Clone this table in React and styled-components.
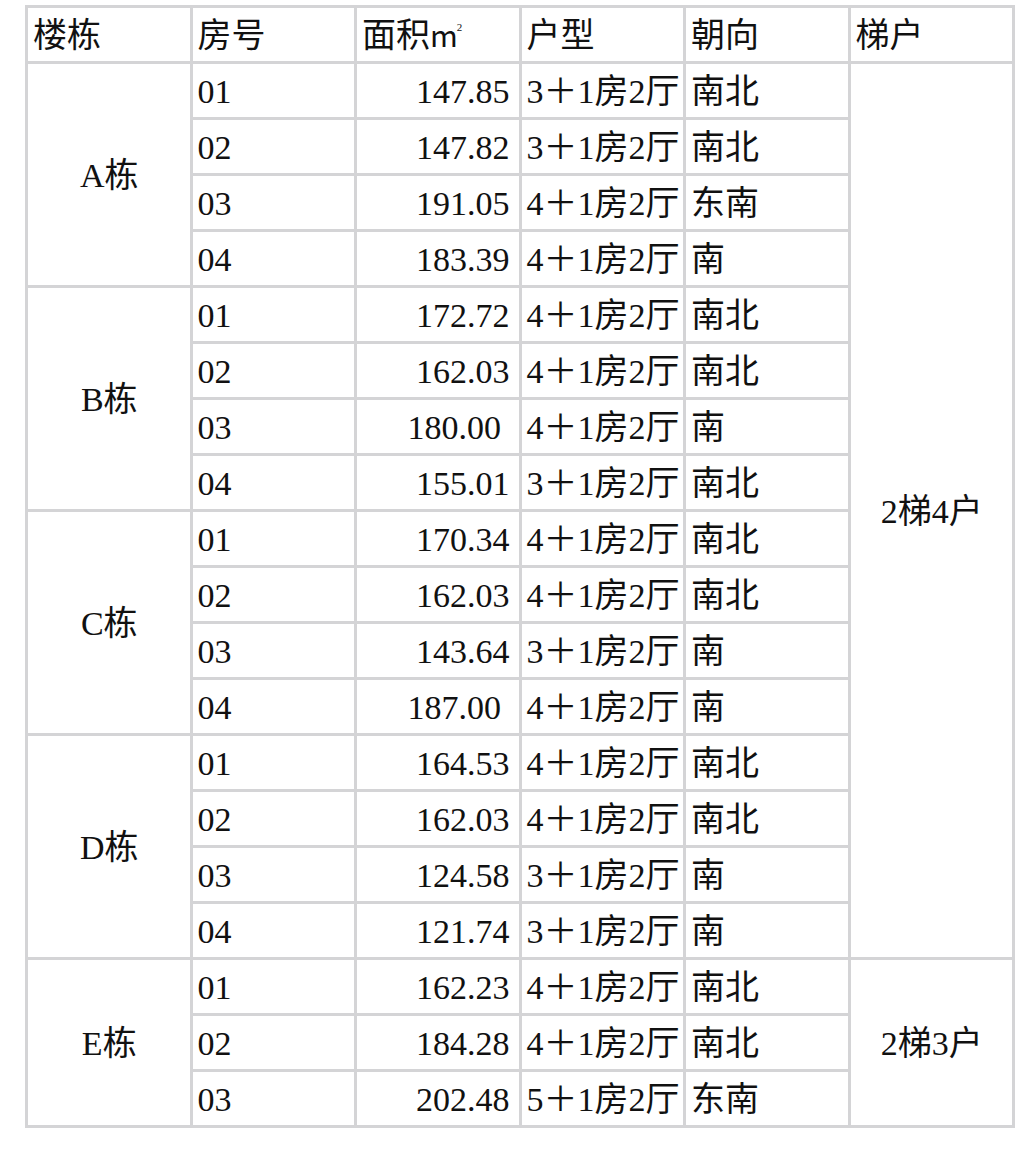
import React from 'react';
import styled, {createGlobalStyle} from 'styled-components';

const GlobalStyle = createGlobalStyle`
    body {
        margin: 0;
        background: #fff;
    }
`;

const Page = styled.div`
    padding: 5px 0 0 25px;
`;

const Table = styled.table`
    width: 990px;
    table-layout: fixed;
    border-collapse: separate;
    border-spacing: 0;
    border-top: solid 3px #d4d4d6;
    border-left: solid 3px #d4d4d6;
    font-family: "Liberation Serif", "Noto Sans CJK SC", serif;
    font-size: 34px;
    color: #111;
`;

const Cell = styled.td`
    height: 51px;
    padding: ${props => props.align === 'right' ? '2px 9px 0 4px' : '2px 4px 0 5px'};
    border-right: solid 3px #d4d4d6;
    border-bottom: solid 3px #d4d4d6;
    text-align: ${props => props.align || 'left'};
    vertical-align: middle;
    white-space: nowrap;
    overflow: visible;
    line-height: 1;
`;

const Unit = styled.span`
    font-family: "Noto Sans CJK SC", "Liberation Sans", sans-serif;
    font-size: 30px;
`;

const Sup = styled.span`
    font-size: 11px;
    vertical-align: 16px;
    margin-left: -1px;
`;

const buildings = [
    {
        name: 'A栋',
        units: [
            ['01', '147.85', '3＋1房2厅', '南北'],
            ['02', '147.82', '3＋1房2厅', '南北'],
            ['03', '191.05', '4＋1房2厅', '东南'],
            ['04', '183.39', '4＋1房2厅', '南'],
        ]
    },
    {
        name: 'B栋',
        units: [
            ['01', '172.72', '4＋1房2厅', '南北'],
            ['02', '162.03', '4＋1房2厅', '南北'],
            ['03', '180.00 ', '4＋1房2厅', '南'],
            ['04', '155.01', '3＋1房2厅', '南北'],
        ]
    },
    {
        name: 'C栋',
        units: [
            ['01', '170.34', '4＋1房2厅', '南北'],
            ['02', '162.03', '4＋1房2厅', '南北'],
            ['03', '143.64', '3＋1房2厅', '南'],
            ['04', '187.00 ', '4＋1房2厅', '南'],
        ]
    },
    {
        name: 'D栋',
        units: [
            ['01', '164.53', '4＋1房2厅', '南北'],
            ['02', '162.03', '4＋1房2厅', '南北'],
            ['03', '124.58', '3＋1房2厅', '南'],
            ['04', '121.74', '3＋1房2厅', '南'],
        ]
    },
    {
        name: 'E栋',
        units: [
            ['01', '162.23', '4＋1房2厅', '南北'],
            ['02', '184.28', '4＋1房2厅', '南北'],
            ['03', '202.48', '5＋1房2厅', '东南'],
        ]
    },
];

// which building starts a stair group, and how many rows it covers
const stairs = {
    0: {label: '2梯4户', span: 16},
    4: {label: '2梯3户', span: 3},
};

function renderRows() {
    let rows = [];
    buildings.forEach((b, bi) => {
        b.units.forEach((u, ui) => {
            let stair = ui === 0 ? stairs[bi] : null;
            rows.push(<tr key={b.name + u[0]}>
                {ui === 0 && <Cell align="center" rowSpan={b.units.length}>{b.name}</Cell>}
                <Cell>{u[0]}</Cell>
                <Cell align="right" style={{whiteSpace: 'pre'}}>{u[1]}</Cell>
                <Cell>{u[2]}</Cell>
                <Cell>{u[3]}</Cell>
                {stair && <Cell align="center" rowSpan={stair.span}>{stair.label}</Cell>}
            </tr>);
        });
    });
    return rows;
}

export default function App() {
    return (
        <Page>
            <GlobalStyle/>
            <Table>
                <tbody>
                    <tr>
                        <Cell>楼栋</Cell>
                        <Cell>房号</Cell>
                        <Cell>面积<Unit>m</Unit><Sup>2</Sup></Cell>
                        <Cell>户型</Cell>
                        <Cell>朝向</Cell>
                        <Cell>梯户</Cell>
                    </tr>
                    {renderRows()}
                </tbody>
            </Table>
        </Page>
    );
}
